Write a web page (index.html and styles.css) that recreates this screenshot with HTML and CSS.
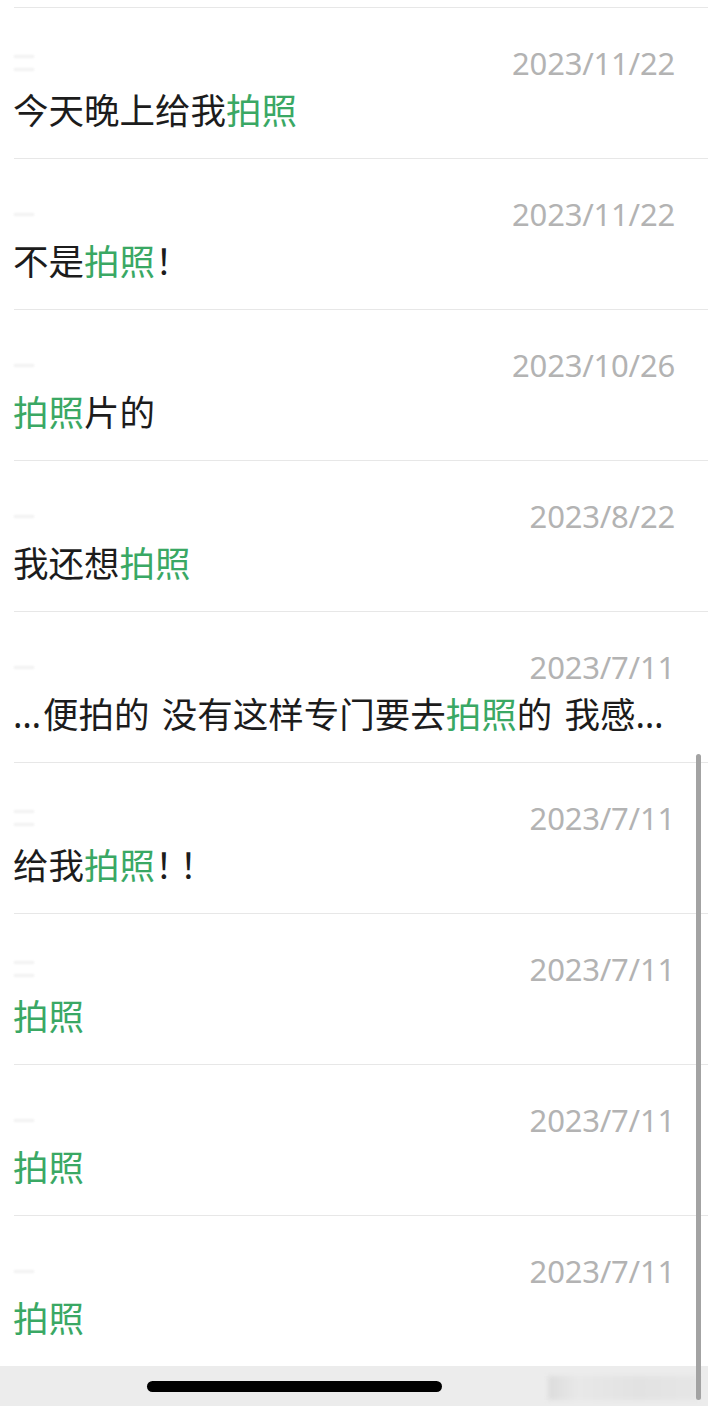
FILE: index.html
```html
<!DOCTYPE html>
<html lang="zh-CN">
<head>
    <meta charset="UTF-8">
    <meta name="viewport" content="width=device-width, initial-scale=1.0">
    <title>聊天记录搜索</title>
    <link rel="stylesheet" href="styles.css">
</head>
<body>
    <div class="screen">
        <div class="top-gap"></div>
        <ul class="result-list">
            <li class="result">
                <div class="meta"><span class="name"><i></i><i></i></span><span class="date">2023/11/22</span></div>
                <div class="msg">今天晚上给我<em>拍照</em></div>
            </li>
            <li class="result">
                <div class="meta"><span class="name"><i></i></span><span class="date">2023/11/22</span></div>
                <div class="msg">不是<em>拍照</em>！</div>
            </li>
            <li class="result">
                <div class="meta"><span class="name"><i></i></span><span class="date">2023/10/26</span></div>
                <div class="msg"><em>拍照</em>片的</div>
            </li>
            <li class="result">
                <div class="meta"><span class="name"><i></i></span><span class="date">2023/8/22</span></div>
                <div class="msg">我还想<em>拍照</em></div>
            </li>
            <li class="result">
                <div class="meta"><span class="name"><i></i></span><span class="date">2023/7/11</span></div>
                <div class="msg"><span class="ell">…</span>便拍的 没有这样专门要去<em>拍照</em>的 我感<span class="ell">…</span></div>
            </li>
            <li class="result">
                <div class="meta"><span class="name"><i></i><i></i></span><span class="date">2023/7/11</span></div>
                <div class="msg">给我<em>拍照</em><span class="tight">！</span>！</div>
            </li>
            <li class="result">
                <div class="meta"><span class="name"><i></i><i></i></span><span class="date">2023/7/11</span></div>
                <div class="msg"><em>拍照</em></div>
            </li>
            <li class="result">
                <div class="meta"><span class="name"><i></i></span><span class="date">2023/7/11</span></div>
                <div class="msg"><em>拍照</em></div>
            </li>
            <li class="result">
                <div class="meta"><span class="name"><i></i></span><span class="date">2023/7/11</span></div>
                <div class="msg"><em>拍照</em></div>
            </li>
        </ul>
        <div class="home-bar">
            <div class="home-indicator"></div>
            <div class="watermark"></div>
        </div>
        <div class="scrollbar"></div>
    </div>
</body>
</html>
```

FILE: styles.css
```css
/* 页面基础 */
body {
    margin: 0;
    background-color: #ffffff;
    font-family: "Noto Sans", "Noto Sans CJK SC", sans-serif;
}

.screen {
    position: relative;
    width: 708px;
    height: 1406px;
    overflow: hidden;
    background: #ffffff;
}

.top-gap {
    height: 7px;
}

/* 搜索结果列表 */
.result-list {
    list-style: none;
    margin: 0;
    padding: 0;
}

.result {
    height: 150px;
    margin-left: 14px;
    border-top: 1px solid #e7e7e7;
}

.meta {
    display: flex;
    justify-content: space-between;
    align-items: center;
    height: 36px;
    padding-top: 37px;
    padding-right: 33px;
}

/* 打码的昵称 */
.name {
    display: flex;
    flex-direction: column;
    gap: 10px;
    width: 26px;
}

.name i {
    display: block;
    height: 3px;
    width: 20px;
    background: #f1f1f1;
    filter: blur(1px);
}

.date {
    font-size: 31px;
    line-height: 36px;
    color: #b3b3b3;
    letter-spacing: -0.2px;
}

.msg {
    margin-top: 7px;
    margin-left: -1px;
    font-family: "Noto Sans", "Noto Sans CJK SC", sans-serif;
    font-size: 35.5px;
    line-height: 44px;
    color: #1c1c1c;
    white-space: nowrap;
    word-spacing: 3px;
}

.msg em {
    font-style: normal;
    color: #3aa864;
}

.ell {
    letter-spacing: 2px;
}

.tight {
    letter-spacing: -11px;
}

/* 底部横条 */
.home-bar {
    position: relative;
    display: flex;
    align-items: center;
    height: 41px;
    padding-left: 147px;
    background: #ececec;
    box-sizing: border-box;
}

.home-indicator {
    width: 295px;
    height: 11px;
    border-radius: 6px;
    background: #000000;
}

.watermark {
    position: absolute;
    left: 548px;
    top: 10px;
    width: 150px;
    height: 24px;
    background: linear-gradient(90deg, #dcdcdc, #e8e8e8 20%, #e2e2e2 60%, #e6e6e6);
    filter: blur(2px);
}

/* 滚动条 */
.scrollbar {
    position: absolute;
    left: 696px;
    top: 754px;
    width: 5px;
    height: 646px;
    border-radius: 3px;
    background: #a3a3a3;
}
```
